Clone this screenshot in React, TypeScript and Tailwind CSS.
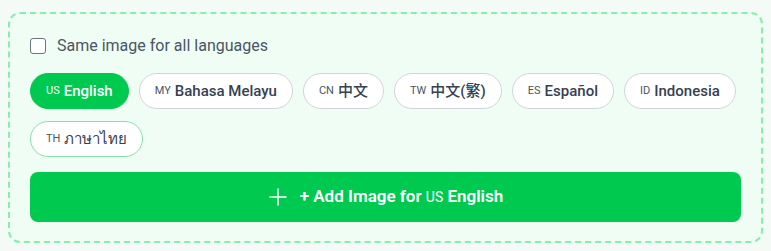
import { FC, useState } from "react";

interface ILanguage {
  code: string;
  label: string;
}

const languages: ILanguage[] = [
  { code: "us", label: "English" },
  { code: "my", label: "Bahasa Melayu" },
  { code: "cn", label: "中文" },
  { code: "tw", label: "中文(繁)" },
  { code: "es", label: "Español" },
  { code: "id", label: "Indonesia" },
  { code: "th", label: "ภาษาไทย" },
];

const PlusIcon: FC = () => (
  <svg width="20" height="20" viewBox="0 0 20 20" fill="none" stroke="currentColor" strokeWidth="1.6" strokeLinecap="round">
    <path d="M10 2v16M2 10h16" />
  </svg>
);

export default function App() {
  const [active, setActive] = useState("us");
  const [same, setSame] = useState(false);
  const current = languages.find((l) => l.code === active)!;

  return (
    <div
      className="min-h-[251px] bg-[#f4fbf7] pt-3 pb-2 px-2"
      style={{ fontFamily: "Roboto, 'Noto Sans', 'Noto Sans CJK SC', sans-serif" }}
    >
      <div className="rounded-xl border-2 border-dashed border-[#86efac] bg-[#effdf4] px-5 pt-5 pb-[19px]">
        <label className="flex items-center gap-[11px] h-6 mb-[15px] cursor-pointer">
          <input
            type="checkbox"
            checked={same}
            onChange={() => setSame(!same)}
            className="appearance-none w-4 h-4 rounded-[3px] border-[1.5px] border-[#6b7280] bg-white"
          />
          <span className="text-base text-[#4b5563]">Same image for all languages</span>
        </label>

        <div className="flex flex-wrap gap-x-2.5 gap-y-3">
          {languages.map((lang) => {
            const isActive = lang.code === active;
            return (
              <button
                key={lang.code}
                onClick={() => setActive(lang.code)}
                className={
                  isActive
                    ? "h-9 px-[15px] rounded-full border border-[#00c950] bg-[#00c950] text-white text-[15px] font-medium flex items-center"
                    : lang.code === "th"
                    ? "h-9 px-[15px] rounded-full border border-[#86e0a6] bg-white text-[#374151] text-[15px] font-medium flex items-center"
                    : "h-9 px-[15px] rounded-full border border-[#d1d5db] bg-white text-[#374151] text-[15px] font-medium flex items-center"
                }
              >
                <span className={isActive ? "uppercase text-[11px] mr-1 font-normal text-white" : "uppercase text-[11px] mr-1 font-normal text-[#4b5563]"}>
                  {lang.code}
                </span>
                {lang.label}
              </button>
            );
          })}
        </div>

        <button className="mt-[15px] w-full h-[50px] rounded-lg bg-[#00c950] text-white flex items-center justify-center gap-3 text-[17px] font-semibold">
          <PlusIcon />
          <span>
            + Add Image for <span className="uppercase text-[14px] font-normal">{current.code}</span> {current.label}
          </span>
        </button>
      </div>
    </div>
  );
}
